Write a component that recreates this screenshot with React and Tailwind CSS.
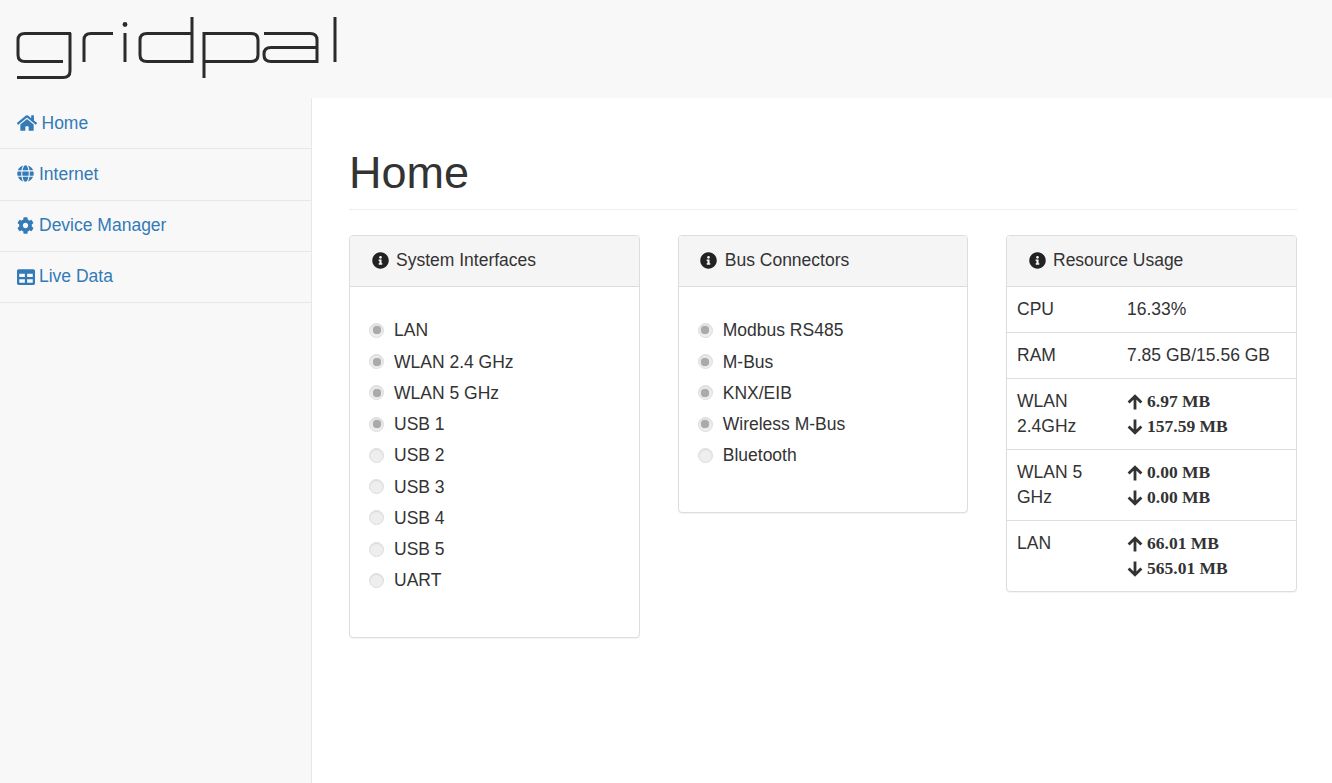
import { FaHome, FaGlobe, FaCog, FaTable, FaInfoCircle } from 'react-icons/fa'

const navItems = [
  { label: 'Home', icon: FaHome, size: 20, gap: 'gap-[4.5px]' },
  { label: 'Internet', icon: FaGlobe, size: 17, gap: 'gap-[5px]' },
  { label: 'Device Manager', icon: FaCog, size: 17, gap: 'gap-[5px]' },
  { label: 'Live Data', icon: FaTable, size: 18, gap: 'gap-[4px]' },
]

const systemInterfaces = [
  ['LAN', true],
  ['WLAN 2.4 GHz', true],
  ['WLAN 5 GHz', true],
  ['USB 1', true],
  ['USB 2', false],
  ['USB 3', false],
  ['USB 4', false],
  ['USB 5', false],
  ['UART', false],
]

const busConnectors = [
  ['Modbus RS485', true],
  ['M-Bus', true],
  ['KNX/EIB', true],
  ['Wireless M-Bus', true],
  ['Bluetooth', false],
]

const ArrowUp = () => (
  <svg width="16" height="16" viewBox="0 0 16 16" className="shrink-0">
    <path d="M8 15.5V3M1.6 8.6L8 2.2l6.4 6.4" fill="none" stroke="#333" strokeWidth="2.8" />
  </svg>
)

const ArrowDown = () => (
  <svg width="16" height="16" viewBox="0 0 16 16" className="shrink-0">
    <path d="M8 .5V13M1.6 7.4L8 13.8l6.4-6.4" fill="none" stroke="#333" strokeWidth="2.8" />
  </svg>
)

const Logo = () => (
  <svg width="340" height="80" viewBox="0 0 340 80" fill="none" stroke="#2b2b2b" strokeWidth="3">
    <path d="M71 33.5H25Q18 33.5 18 40V55Q18 61.5 25 61.5H63" />
    <path d="M70 33V71Q70 77.5 63 77.5H17" />
    <path d="M84 62V40Q84 33.5 91 33.5H113" />
    <path d="M125 33V62" />
    <circle cx="125" cy="24.5" r="2.4" fill="#2b2b2b" stroke="none" />
    <path d="M192 17V61.5H147Q140 61.5 140 55V40Q140 33.5 147 33.5H192" />
    <path d="M204 78V33.5H251Q258 33.5 258 40V55Q258 61.5 251 61.5H204" />
    <path d="M264 33.5H310Q317 33.5 317 40V61.5H271Q264 61.5 264 55V54Q264 47.5 271 47.5H317" />
    <path d="M335 17V62" />
  </svg>
)

const Panel = ({ title, children }) => (
  <div className="bg-white border border-[#ddd] rounded-[4px] shadow-[0_1px_1px_rgba(0,0,0,0.05)] overflow-hidden">
    <div className="h-[51px] flex items-center pl-[21.5px] gap-[7.5px] bg-[#f5f5f5] border-b border-[#ddd]">
      <FaInfoCircle size={17} className="text-[#222] -mt-[2px]" />
      <span className="-mt-[2px]">{title}</span>
    </div>
    {children}
  </div>
)

const Radio = ({ on }) => (
  <span className="w-[15px] h-[15px] rounded-full bg-[#eee] border border-[#ddd] shadow-[inset_0_1px_1px_rgba(0,0,0,0.08)] flex items-center justify-center shrink-0">
    {on && <span className="w-[8px] h-[8px] rounded-full bg-[#aaa] shadow-[0_0_1px_#aaa]" />}
  </span>
)

const StatusList = ({ items }) => (
  <div className="pt-[27.85px] pb-[40.45px] pl-[19px]">
    {items.map(([label, on]) => (
      <div key={label} className="h-[31.25px] flex items-center gap-[10px]">
        <Radio on={on} />
        <span>{label}</span>
      </div>
    ))}
  </div>
)

const Traffic = ({ up, down }) => (
  <div className="font-['Liberation_Serif',serif] font-bold text-[17.5px]">
    <div className="h-[25px] flex items-center gap-[4px]"><ArrowUp />{up}</div>
    <div className="h-[25px] flex items-center gap-[4px]"><ArrowDown />{down}</div>
  </div>
)

const Row = ({ name, children, last }) => (
  <div className={`flex px-[10px] py-[10px] leading-[25px] ${last ? '' : 'border-b border-[#ddd]'}`}>
    <div className="w-[110px] shrink-0 pr-[10px]">{name}</div>
    <div>{children}</div>
  </div>
)

export default function App() {
  return (
    <div className="min-h-[783px] flex flex-col bg-white text-[17.5px] text-[#333] font-['Liberation_Sans',Arial,sans-serif]">
      <header className="h-[98px] bg-[#f8f8f8] shrink-0">
        <Logo />
      </header>
      <div className="flex flex-1">
        <nav className="w-[312px] shrink-0 bg-[#f8f8f8] border-r border-[#e7e7e7]">
          {navItems.map(({ label, icon: Icon, size, gap }) => (
            <div key={label} className={`h-[51.3px] pl-[17px] flex items-center ${gap} border-b border-[#e7e7e7] text-[#337ab7]`}>
              <Icon size={size} className="-mt-[1px]" />
              <span className="-mt-[1px]">{label}</span>
            </div>
          ))}
        </nav>
        <main className="flex-1 pl-[37px] pr-[35px] min-w-0">
          <h1 className="pt-[50px] h-[112px] text-[45px] leading-[50px] font-medium border-b border-[#eee]">Home</h1>
          <div className="mt-[25px] grid grid-cols-[291px_290.5px_291px] gap-[37.75px] items-start">
            <Panel title="System Interfaces">
              <StatusList items={systemInterfaces} />
            </Panel>
            <Panel title="Bus Connectors">
              <StatusList items={busConnectors} />
            </Panel>
            <Panel title="Resource Usage">
              <Row name="CPU">16.33%</Row>
              <Row name="RAM">7.85 GB/15.56 GB</Row>
              <Row name="WLAN 2.4GHz"><Traffic up="6.97 MB" down="157.59 MB" /></Row>
              <Row name="WLAN 5 GHz"><Traffic up="0.00 MB" down="0.00 MB" /></Row>
              <Row name="LAN" last><Traffic up="66.01 MB" down="565.01 MB" /></Row>
            </Panel>
          </div>
        </main>
      </div>
    </div>
  )
}
